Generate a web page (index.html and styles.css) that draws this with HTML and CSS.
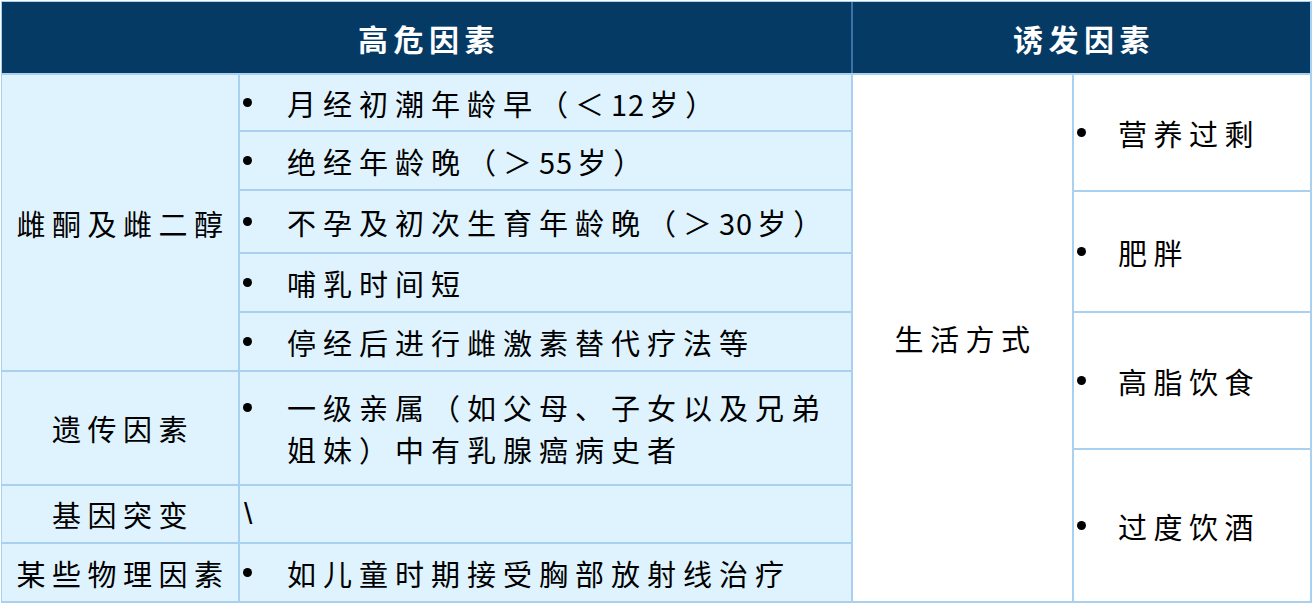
FILE: index.html
```html
<!DOCTYPE html>
<html lang="zh-CN">
<head>
<meta charset="utf-8">
<title>乳腺癌危险因素</title>
<link rel="stylesheet" href="styles.css">
</head>
<body>
<div class="table">
  <div class="head">
    <div class="hcell">高危因素</div>
    <div class="hcell">诱发因素</div>
  </div>
  <div class="body">
    <div class="left">
      <div class="cat r1">雌酮及雌二醇</div>
      <div class="item"><span class="b"><i></i></span><span class="t">月经初潮年龄早（＜<span class="num">12</span>岁）</span></div>
      <div class="item"><span class="b"><i></i></span><span class="t">绝经年龄晚（＞<span class="num">55</span>岁）</span></div>
      <div class="item"><span class="b"><i></i></span><span class="t">不孕及初次生育年龄晚（＞<span class="num">30</span>岁）</span></div>
      <div class="item"><span class="b"><i></i></span><span class="t">哺乳时间短</span></div>
      <div class="item"><span class="b"><i></i></span><span class="t">停经后进行雌激素替代疗法等</span></div>
      <div class="cat">遗传因素</div>
      <div class="item multi"><span class="b"><i></i></span><span class="t">一级亲属（如父母、子女以及兄弟<br>姐妹）中有乳腺癌病史者</span></div>
      <div class="cat">基因突变</div>
      <div class="item"><span class="t slash">\</span></div>
      <div class="cat">某些物理因素</div>
      <div class="item"><span class="b"><i></i></span><span class="t">如儿童时期接受胸部放射线治疗</span></div>
    </div>
    <div class="right">
      <div class="life">生活方式</div>
      <div class="ritem"><span class="b"><i></i></span><span class="rt">营养过剩</span></div>
      <div class="ritem"><span class="b"><i></i></span><span class="rt">肥胖</span></div>
      <div class="ritem"><span class="b"><i></i></span><span class="rt">高脂饮食</span></div>
      <div class="ritem"><span class="b"><i></i></span><span class="rt">过度饮酒</span></div>
    </div>
  </div>
</div>
</body>
</html>
```

FILE: styles.css
```css
html, body {
  margin: 0;
  padding: 0;
  background: #ffffff;
}

body {
  font-family: "Noto Sans CJK SC", "Noto Sans", sans-serif;
  color: #000000;
}

.table {
  margin: 1px 0 0 1px;
  width: 1311px;
  box-sizing: border-box;
  padding: 1px 2px 2px 1px;
  background: #a9d0ee;
  display: flex;
  flex-direction: column;
  gap: 2px;
}

.head {
  display: grid;
  grid-template-columns: 849px 457px;
  column-gap: 2px;
  background: #3a73a6;
  height: 71px;
}

.hcell {
  background: #053a64;
  color: #ffffff;
  font-weight: 700;
  font-size: 30px;
  letter-spacing: 5.5px;
  padding-left: 5px;
  display: flex;
  align-items: center;
  justify-content: center;
}

.body {
  display: grid;
  grid-template-columns: 849px 457px;
  column-gap: 2px;
  height: 526px;
}

.left {
  display: grid;
  grid-template-columns: 236px 611px;
  grid-template-rows: 55px 57px 61px 57px 57px 112px 56px 57px;
  gap: 2px;
}

.cat {
  background: #dff3fe;
  font-size: 29px;
  letter-spacing: 6.5px;
  padding-left: 6px;
  display: flex;
  align-items: center;
  justify-content: center;
  white-space: nowrap;
}

.cat.r1 {
  grid-row: span 5;
}

.item {
  background: #dff3fe;
  display: flex;
  align-items: center;
  padding-left: 3px;
  font-size: 29px;
  letter-spacing: 7px;
  line-height: 42px;
}

.num {
  letter-spacing: 1px;
  margin-right: 4px;
}

.b {
  display: flex;
  align-items: center;
  height: 42px;
  width: 44px;
  flex: none;
}

.b i {
  display: block;
  width: 9px;
  height: 9px;
  border-radius: 50%;
  background: #000000;
}

.t {
  white-space: nowrap;
}

.item.multi .b {
  margin-bottom: 42px;
}

.slash {
  font-family: "Liberation Sans", sans-serif;
  font-size: 30px;
  padding-left: 1px;
}

.right {
  display: grid;
  grid-template-columns: 219px 236px;
  grid-template-rows: 115px 119px 135px 151px;
  gap: 2px;
}

.life {
  grid-row: 1 / span 4;
  background: #ffffff;
  font-size: 29px;
  letter-spacing: 6.5px;
  padding-left: 6px;
  display: flex;
  align-items: center;
  justify-content: center;
}

.ritem {
  background: #ffffff;
  display: flex;
  align-items: center;
  padding-left: 3px;
  font-size: 29px;
  letter-spacing: 6.5px;
}

.ritem .b {
  width: 41px;
}
```
